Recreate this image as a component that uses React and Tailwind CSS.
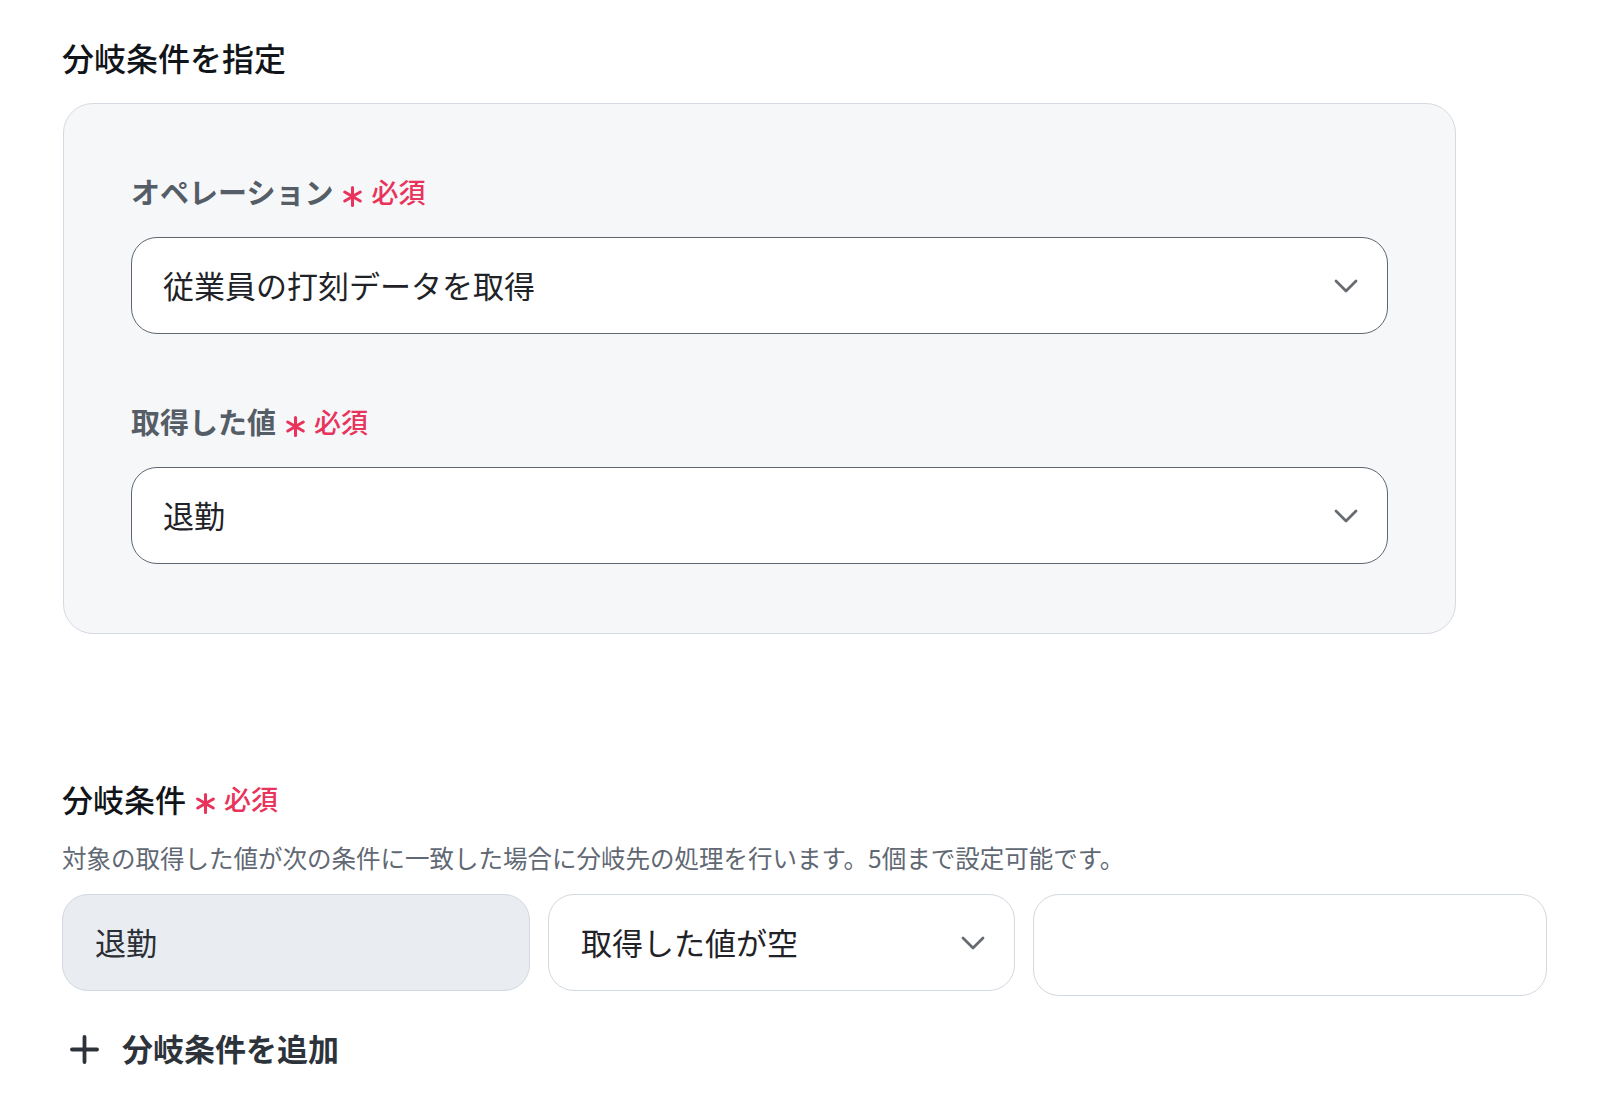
import React, { useState } from "react";

const Chevron = () => (
    <svg width="24" height="14" viewBox="0 0 24 14" fill="none" className="shrink-0">
        <path d="M2 2l10 10 10-10" stroke="#666b70" strokeWidth="2.8" strokeLinecap="round" strokeLinejoin="round" />
    </svg>
);

// 必須マーク
const Required = () => (
    <span className="inline-flex items-center gap-[8px] ml-[9px]">
        <svg width="21" height="21" viewBox="0 0 20 20" className="mt-[9px]" fill="none" stroke="#e8335c" strokeWidth="2.9" strokeLinecap="round">
            <path d="M10 1.5v17" />
            <path d="M2.6 5.75l14.8 8.5" />
            <path d="M2.6 14.25l14.8-8.5" />
        </svg>
        <span className="text-[27px] font-medium text-[#e8335c]">必須</span>
    </span>
);

const SelectBox = ({ value }) => (
    <div className="flex items-center justify-between h-[97px] bg-white border border-[#5f6670] rounded-[26px] pl-[31px] pr-[29px]">
        <span className="text-[31px] text-[#1f2328]">{value}</span>
        <Chevron />
    </div>
);

export default function App() {
    const [operation] = useState("従業員の打刻データを取得");
    const [value] = useState("退勤");

    return (
        <div className="min-h-screen w-full bg-white pl-[62px] pt-[35px] font-['Noto_Sans_CJK_JP','Noto_Sans',sans-serif]">
            {/* 見出し */}
            <h2 className="text-[32px] leading-[44px] font-medium text-[#111418]">分岐条件を指定</h2>

            {/* オペレーション設定 */}
            <div className="mt-[24px] ml-px w-[1393px] bg-[#f6f7f9] border border-[#d5dae2] rounded-[30px] px-[67px] pt-[67px] pb-[69px]">
                <div className="flex items-center h-[42px] mb-6">
                    <span className="text-[29px] font-bold text-[#555d67]">オペレーション</span>
                    <Required />
                </div>
                <SelectBox value={operation} />

                <div className="flex items-center h-[42px] mt-[67px] mb-6">
                    <span className="text-[29px] font-bold text-[#555d67]">取得した値</span>
                    <Required />
                </div>
                <SelectBox value={value} />
            </div>

            {/* 分岐条件 */}
            <div className="mt-[143px] flex items-center h-[44px]">
                <span className="text-[31px] font-medium text-[#111418]">分岐条件</span>
                <Required />
            </div>
            <p className="mt-[19px] text-[24.5px] leading-[36px] text-[#5f6873]">
                対象の取得した値が次の条件に一致した場合に分岐先の処理を行います。5個まで設定可能です。
            </p>

            <div className="mt-[18px] flex items-start gap-[18px]">
                <div className="w-[468px] h-[97px] flex items-center px-8 bg-[#e9ecf0] border border-[#d3d9e1] rounded-[26px]">
                    <span className="text-[31px] text-[#2a2f35]">{value}</span>
                </div>
                <div className="w-[467px] h-[97px] flex items-center justify-between pl-8 pr-[29px] bg-white border border-[#d3d9e1] rounded-[26px]">
                    <span className="text-[31px] text-[#1f2328]">取得した値が空</span>
                    <Chevron />
                </div>
                <div className="w-[514px] h-[102px] bg-white border border-[#d3d9e1] rounded-[26px]" />
            </div>

            <button className="mt-[30px] flex items-center h-[44px] text-[#2d333a]">
                <svg width="29" height="29" viewBox="0 0 29 29" className="ml-[8px] mt-[3px]" fill="none" stroke="#2d333a" strokeWidth="3.8" strokeLinecap="round">
                    <path d="M14.5 2v25" />
                    <path d="M2 14.5h25" />
                </svg>
                <span className="ml-[23px] text-[31px] font-semibold">分岐条件を追加</span>
            </button>
        </div>
    );
}
